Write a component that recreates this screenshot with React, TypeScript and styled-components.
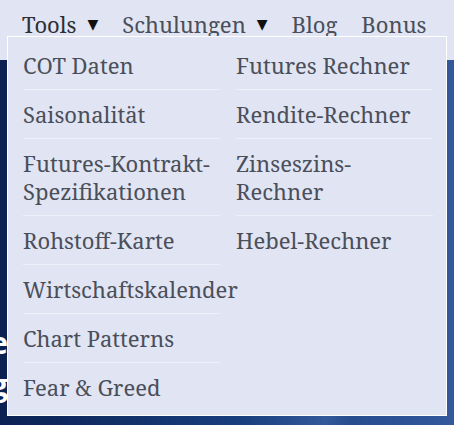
import * as React from 'react';
import styled, { createGlobalStyle } from 'styled-components';

const GlobalStyle = createGlobalStyle`
  html, body {
    margin: 0;
    padding: 0;
    overflow: hidden;
  }
  body {
    font-family: 'Noto Serif', 'DejaVu Serif', 'Liberation Serif', serif;
  }
`;

const leftItems = [
  'COT Daten',
  'Saisonalität',
  'Futures-Kontrakt-Spezifikationen',
  'Rohstoff-Karte',
  'Wirtschaftskalender',
  'Chart Patterns',
  'Fear & Greed',
];

const rightItems = ['Futures Rechner', 'Rendite-Rechner', 'Zinseszins-Rechner', 'Hebel-Rechner'];

export default function App() {
  return (
    <>
      <GlobalStyle />
      <Page>
        <TopBar>
          <NavItem $active>
            Tools <Caret>▼</Caret>
          </NavItem>
          <NavItem>
            Schulungen <Caret>▼</Caret>
          </NavItem>
          <NavItem>Blog</NavItem>
          <NavItem>Bonus</NavItem>

          <Dropdown>
            <Column>
              {leftItems.map((label) => (
                <MenuLink key={label}>{label}</MenuLink>
              ))}
            </Column>
            <Column>
              {rightItems.map((label) => (
                <MenuLink key={label}>{label}</MenuLink>
              ))}
            </Column>
          </Dropdown>
        </TopBar>

        <Hero>
          <HeroTitle>
            <span>Futures-Trade</span>
            <span>Trading</span>
          </HeroTitle>
        </Hero>
      </Page>
    </>
  );
}

const Page = styled.div`
  display: flex;
  flex-direction: column;
  width: 454px;
  height: 425px;
`;

const TopBar = styled.nav`
  position: relative;
  z-index: 5;
  display: flex;
  align-items: flex-start;
  height: 60px;
  padding: 8px 0 0 22px;
  box-sizing: border-box;
  background: #e1e4f2;
`;

const NavItem = styled.a<{ $active?: boolean }>`
  display: flex;
  align-items: center;
  margin-right: 24px;
  font-size: 22px;
  line-height: 32px;
  color: ${({ $active }) => ($active ? '#2e2f33' : '#4a4f5a')};
  white-space: nowrap;
  cursor: pointer;
`;

const Caret = styled.span`
  margin-left: 11px;
  font-size: 14px;
  color: #111;
`;

const Dropdown = styled.div`
  position: absolute;
  top: 36px;
  left: 7px;
  width: 440px;
  height: 380px;
  box-sizing: border-box;
  border: 1px solid #ffffff;
  background: #e1e4f2;
  padding: 4px 14px 5px 15px;
  display: grid;
  grid-template-columns: 197px 197px;
  column-gap: 16px;
  align-items: start;
`;

const Column = styled.div`
  display: flex;
  flex-direction: column;
`;

const MenuLink = styled.a`
  display: block;
  padding: 10px 0;
  font-size: 22px;
  line-height: 28px;
  color: #4a4f5a;
  border-bottom: 1px solid #eef0f9;
  white-space: normal;
  cursor: pointer;

  &:last-child {
    border-bottom: none;
  }
`;

const Hero = styled.section`
  flex: 1;
  position: relative;
  overflow: hidden;
  background:
    linear-gradient(100deg, transparent 60%, rgba(120, 160, 220, 0.18) 75%, transparent 80%),
    linear-gradient(90deg, #0b2152 0%, #163a78 45%, #2d5397 90%, #33589b 100%);
`;

const HeroTitle = styled.div`
  display: flex;
  flex-direction: column;
  align-items: flex-end;
  width: 8px;
  margin-top: 262px;
  font-family: 'Open Sans', 'DejaVu Sans', sans-serif;
  font-size: 30px;
  font-weight: 700;
  line-height: 42px;
  color: #ffffff;
  white-space: nowrap;
`;
